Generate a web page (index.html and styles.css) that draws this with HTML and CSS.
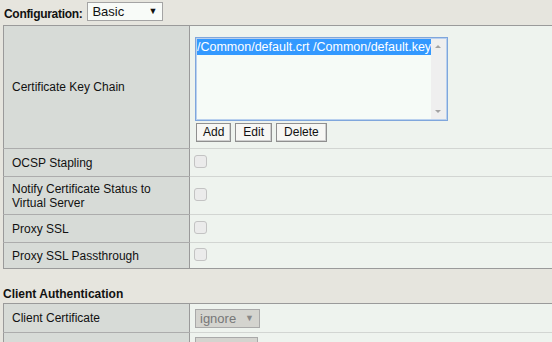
FILE: index.html
```html
<!DOCTYPE html>
<html>
<head>
<meta charset="utf-8">
<link rel="stylesheet" href="styles.css">
</head>
<body>
<div class="page">
  <div class="config">
    <span class="config-label">Configuration:</span>
    <span class="select basic"><span class="sel-text">Basic</span><span class="arrow">&#9660;</span></span>
  </div>
  <table class="props">
    <tr class="row-chain">
      <td class="label">Certificate Key Chain</td>
      <td class="value">
        <div class="chain">
          <div class="listbox">
            <div class="options">
              <div class="option selected">/Common/default.crt /Common/default.key</div>
            </div>
            <div class="scrollbar">
              <span class="sb-up"></span>
              <span class="sb-down"></span>
            </div>
          </div>
          <div class="buttons">
            <span class="btn btn-add">Add</span>
            <span class="btn">Edit</span>
            <span class="btn">Delete</span>
          </div>
        </div>
      </td>
    </tr>
    <tr class="row">
      <td class="label">OCSP Stapling</td>
      <td class="value"><span class="checkbox"></span></td>
    </tr>
    <tr class="row row-two">
      <td class="label">Notify Certificate Status to<br>Virtual Server</td>
      <td class="value"><span class="checkbox"></span></td>
    </tr>
    <tr class="row">
      <td class="label">Proxy SSL</td>
      <td class="value"><span class="checkbox"></span></td>
    </tr>
    <tr class="row row-last">
      <td class="label">Proxy SSL Passthrough</td>
      <td class="value"><span class="checkbox"></span></td>
    </tr>
  </table>
  <div class="section-title">Client Authentication</div>
  <table class="props">
    <tr class="row row-client">
      <td class="label">Client Certificate</td>
      <td class="value"><span class="select disabled"><span class="sel-text">ignore</span><span class="arrow">&#9660;</span></span></td>
    </tr>
    <tr class="row">
      <td class="label">&nbsp;</td>
      <td class="value"><span class="select disabled partial"><span class="sel-text">&nbsp;</span></span></td>
    </tr>
  </table>
</div>
</body>
</html>
```

FILE: styles.css
```css
html, body {
  margin: 0;
  padding: 0;
  background: #e6e5de;
  overflow: hidden;
}
body {
  width: 552px;
  height: 342px;
  font-family: "Liberation Sans", Arial, sans-serif;
  font-size: 12px;
  color: #111;
}
.page {
  padding-left: 3px;
}
.config {
  height: 25px;
  display: flex;
  align-items: center;
  gap: 5px;
  padding-left: 1px;
}
.config-label {
  font-weight: bold;
  font-size: 12px;
  letter-spacing: -0.3px;
  padding-top: 3px;
}
.select {
  display: inline-flex;
  align-items: center;
  justify-content: space-between;
  box-sizing: border-box;
  border: 1px solid #a4a4a4;
  background: #f8fbf8;
  height: 19px;
  padding: 0 5px 0 4px;
  font-size: 13px;
}
.basic {
  width: 76px;
  margin-bottom: 3px;
}
.arrow {
  font-size: 9px;
}
.props {
  border-collapse: collapse;
  width: 560px;
  border-top: 1px solid #9a9a9a;
  border-left: 1px solid #9a9a9a;
  border-bottom: 1px solid #9a9a9a;
}
.props td {
  padding: 0;
}
.label {
  width: 177px;
  background: #d7dbd7;
  border-right: 1px solid #9a9a9a;
  border-bottom: 1px solid #acacac;
  padding-left: 8px !important;
  vertical-align: middle;
  line-height: 14px;
}
.value {
  background: #eef3ee;
  border-bottom: 1px solid #d2d5d2;
  vertical-align: middle;
  padding-left: 4px !important;
}
.row-chain td {
  height: 122px;
}
.row td {
  height: 27px;
}
.row-two td {
  height: 37px;
}
.row-last td {
  height: 25px;
  border-bottom: none;
}
.chain {
  padding: 11px 0 6px 1px;
}
.listbox {
  width: 253px;
  height: 84px;
  box-sizing: border-box;
  border: 1px solid #7fa6dc;
  box-shadow: 0 0 0 1px #b9d0ee inset;
  background: #f6fbf7;
  display: flex;
  padding: 1px;
}
.options {
  flex: 1;
}
.option {
  height: 16px;
  line-height: 16px;
  font-size: 12.5px;
  padding-left: 0;
  white-space: nowrap;
  overflow: hidden;
}
.selected {
  background: #3399ff;
  color: #fff;
}
.scrollbar {
  width: 15px;
  background: #efefef;
  position: relative;
}
.sb-up, .sb-down {
  position: absolute;
  left: 4px;
  width: 0;
  height: 0;
  border-left: 3px solid transparent;
  border-right: 3px solid transparent;
}
.sb-up {
  top: 6px;
  border-bottom: 3px solid #a3a3a3;
}
.sb-down {
  bottom: 6px;
  border-top: 3px solid #a3a3a3;
}
.buttons {
  display: flex;
  gap: 4px;
  margin-top: 2px;
  padding-left: 1px;
}
.btn {
  display: inline-block;
  box-sizing: border-box;
  height: 19px;
  line-height: 17px;
  border: 1px solid #8f8f8f;
  background: #f7f7f4;
  padding: 0 7px;
  font-size: 12px;
  box-shadow: inset -1px -1px 0 #cfcfcf;
}
.btn-add {
  padding: 0 6px;
}
.checkbox {
  display: block;
  width: 11px;
  height: 11px;
  border: 1px solid #c3c3c3;
  border-radius: 3px;
  background: #ebebeb;
  margin-left: 0;
  margin-top: -2px;
}
.section-title {
  font-weight: bold;
  height: 34px;
  line-height: 14px;
  padding-top: 18px;
  box-sizing: border-box;
}
.row-client td {
  height: 28px;
}
.disabled {
  width: 65px;
  background: #d4d4cf;
  border-color: #a9a9a9;
  color: #777;
  font-size: 13px;
  margin-left: 1px;
}
.disabled .arrow {
  color: #888;
}
.partial {
  width: 63px;
  vertical-align: bottom;
}
```
